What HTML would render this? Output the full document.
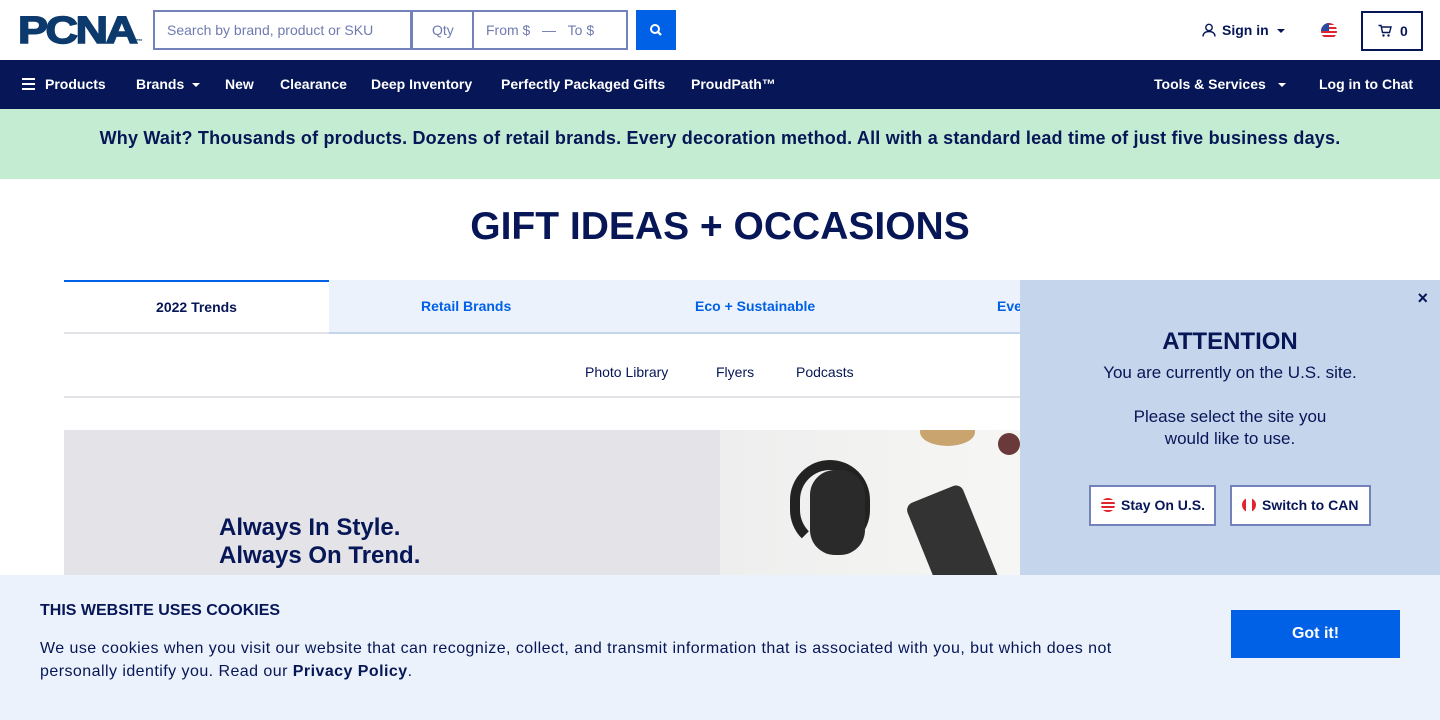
<!DOCTYPE html>
<html><head><meta charset="utf-8"><style>
*{box-sizing:border-box;margin:0;padding:0}
body{width:1440px;height:720px;overflow:hidden;position:relative;font-family:"Liberation Sans",sans-serif;color:#061656;background:#fff}
.abs{position:absolute}
.inp{position:absolute;top:10px;height:40px;border:2px solid #7382bb;color:#6f7bb0;font-size:14px;line-height:36px;padding-left:12px}
.nav{top:60px;left:0;width:1440px;height:49px;background:#061656;color:#fff;font-size:14px;font-weight:bold}
.nav > span{position:absolute;top:16px}
.caret{display:inline-block;width:0;height:0;border-left:4px solid transparent;border-right:4px solid transparent;border-top:4px solid currentColor;vertical-align:middle;margin-left:8px}
.green{top:109px;left:0;width:1440px;height:70px;background:#c3ecd3;font-size:18px;font-weight:bold;text-align:center;line-height:58px;letter-spacing:0.2px}
h1{position:absolute;top:205px;left:0;width:1440px;text-align:center;font-size:39px;font-weight:bold}
.tab{position:absolute;top:280px;height:54px;font-size:14px;font-weight:bold;text-align:center;line-height:54px}
.btn{position:absolute;top:485px;height:41px;background:#fff;border:2px solid #7382bb;font-size:14px;font-weight:bold;line-height:37px;padding-left:10px}
.flag{display:inline-block;width:14px;height:14px;border-radius:50%;vertical-align:-2px;margin-right:6px}
</style></head><body>
<div class="abs" style="left:18px;top:10px;font-size:38px;font-weight:900;letter-spacing:-2px;color:#0c3a6c;transform:scaleX(1.18);transform-origin:left top;-webkit-text-stroke:1.5px #0c3a6c">PCNA<span style="font-size:6px;letter-spacing:0;-webkit-text-stroke:0">™</span></div>
<div class="inp" style="left:153px;width:260px">Search by brand, product or SKU</div>
<div class="inp" style="left:410px;width:64px;padding-left:20px">Qty</div>
<div class="inp" style="left:472px;width:156px">From $ &nbsp;&nbsp;— &nbsp;&nbsp;To $</div>
<div class="abs" style="left:636px;top:10px;width:40px;height:40px;background:#0060e6">
<svg width="40" height="40"><circle cx="19" cy="19" r="4" fill="none" stroke="#fff" stroke-width="2"/><line x1="22" y1="22" x2="25" y2="25" stroke="#fff" stroke-width="2.2"/></svg></div>
<div class="abs" style="left:1202px;top:22px;font-size:14px;font-weight:bold">
<svg width="14" height="14" style="vertical-align:-2px;margin-right:6px"><circle cx="7" cy="4.5" r="3.2" fill="none" stroke="#061656" stroke-width="1.4"/><path d="M1 13.5c0-3.5 2.7-5 6-5s6 1.5 6 5" fill="none" stroke="#061656" stroke-width="1.4"/></svg>Sign in<span class="caret"></span></div>
<div class="abs" style="left:1321px;top:23px;width:16px;height:16px;border-radius:50%;background:repeating-linear-gradient(#e0232e 0 2px,#fff 2px 4px);overflow:hidden"><div style="width:8px;height:8px;background:#2a4ba0"></div></div>
<div class="abs" style="left:1361px;top:11px;width:62px;height:40px;border:2px solid #061656;font-size:14px;font-weight:bold;line-height:36px;padding-left:15px">
<svg width="14" height="13" style="vertical-align:-1px;margin-right:8px"><path d="M0.5 1.5h2.5l1.5 7h7l1.5-5.5h-9.5" fill="none" stroke="#061656" stroke-width="1.4"/><circle cx="5.5" cy="11.5" r="1.2" fill="#061656"/><circle cx="10.5" cy="11.5" r="1.2" fill="#061656"/></svg>0</div>
<div class="abs nav">
<span style="left:22px"><svg width="13" height="12" style="vertical-align:-1px;margin-right:10px"><rect y="0" width="13" height="2" fill="#fff"/><rect y="5" width="13" height="2" fill="#fff"/><rect y="10" width="13" height="2" fill="#fff"/></svg>Products</span>
<span style="left:136px">Brands<span class="caret"></span></span>
<span style="left:225px">New</span>
<span style="left:280px">Clearance</span>
<span style="left:371px">Deep Inventory</span>
<span style="left:501px">Perfectly Packaged Gifts</span>
<span style="left:691px">ProudPath™</span>
<span style="left:1154px">Tools &amp; Services<span class="caret" style="margin-left:12px"></span></span>
<span style="left:1319px">Log in to Chat</span>
</div>
<div class="abs green">Why Wait? Thousands of products. Dozens of retail brands. Every decoration method. All with a standard lead time of just five business days.</div>
<h1>GIFT IDEAS + OCCASIONS</h1>
<div class="tab" style="left:64px;width:265px;border-top:2px solid #0060e6;border-bottom:2px solid #e3e3e8;line-height:50px;color:#061656">2022 Trends</div>
<div class="tab" style="left:329px;width:700px;background:#ebf2fb;border-bottom:2px solid #c5d5ec;line-height:52px;color:#0060e6;text-align:left">
<span style="position:absolute;left:92px">Retail Brands</span><span style="position:absolute;left:366px">Eco + Sustainable</span><span style="position:absolute;left:668px">Eve</span></div>
<div class="abs" style="top:364px;left:585px;font-size:14px">Photo Library</div>
<div class="abs" style="top:364px;left:716px;font-size:14px">Flyers</div>
<div class="abs" style="top:364px;left:796px;font-size:14px">Podcasts</div>
<div class="abs" style="top:396px;left:64px;width:960px;height:2px;background:#e3e3e8"></div>
<div class="abs" style="top:430px;left:64px;width:656px;height:150px;background:#e3e3e8"></div>
<div class="abs" style="top:514px;left:219px;font-size:24px;font-weight:bold;line-height:28px">Always In Style.<br>Always On Trend.</div>
<div class="abs" style="top:430px;left:720px;width:300px;height:150px;background:linear-gradient(90deg,#eee 0,#f6f6f4 100%);overflow:hidden">
<div class="abs" style="left:70px;top:30px;width:80px;height:90px;border:10px solid #222;border-radius:45px;border-bottom-color:transparent"></div>
<div class="abs" style="left:90px;top:40px;width:55px;height:85px;background:#2a2a2a;border-radius:25px"></div>
<div class="abs" style="left:205px;top:60px;width:60px;height:120px;background:#333;transform:rotate(-22deg);border-radius:8px"></div>
<div class="abs" style="left:200px;top:-12px;width:55px;height:28px;background:#c9a46f;border-radius:50%"></div>
<div class="abs" style="left:278px;top:3px;width:22px;height:22px;background:#6a3a3a;border-radius:50%"></div>
</div>
<div class="abs" style="top:280px;left:1020px;width:420px;height:300px;background:#c5d5ec;text-align:center">
<div class="abs" style="right:12px;top:8px;font-size:18px;font-weight:bold">×</div>
<div style="margin-top:48px;font-size:24px;font-weight:bold">ATTENTION</div>
<div style="font-size:17px;line-height:22px;margin-top:6px">You are currently on the U.S. site.<br><br>Please select the site you<br>would like to use.</div>
</div>
<div class="btn" style="left:1089px;width:127px"><span class="flag" style="background:repeating-linear-gradient(#e0232e 0 2px,#fff 2px 4px)"></span>Stay On U.S.</div>
<div class="btn" style="left:1230px;width:141px"><span class="flag" style="background:linear-gradient(90deg,#e0232e 0 4px,#fff 4px 10px,#e0232e 10px)"></span>Switch to CAN</div>
<div class="abs" style="top:575px;left:0;width:1440px;height:145px;background:#ebf2fb">
<div class="abs" style="left:40px;top:27px;font-size:16px;font-weight:bold">THIS WEBSITE USES COOKIES</div>
<div class="abs" style="left:40px;top:62px;font-size:16px;line-height:23px;width:1090px;letter-spacing:0.45px">We use cookies when you visit our website that can recognize, collect, and transmit information that is associated with you, but which does not personally identify you. Read our <b>Privacy Policy</b>.</div>
<div class="abs" style="left:1231px;top:35px;width:169px;height:48px;background:#0060e6;color:#fff;font-size:16px;font-weight:bold;text-align:center;line-height:48px">Got it!</div>
</div>
</body></html>
